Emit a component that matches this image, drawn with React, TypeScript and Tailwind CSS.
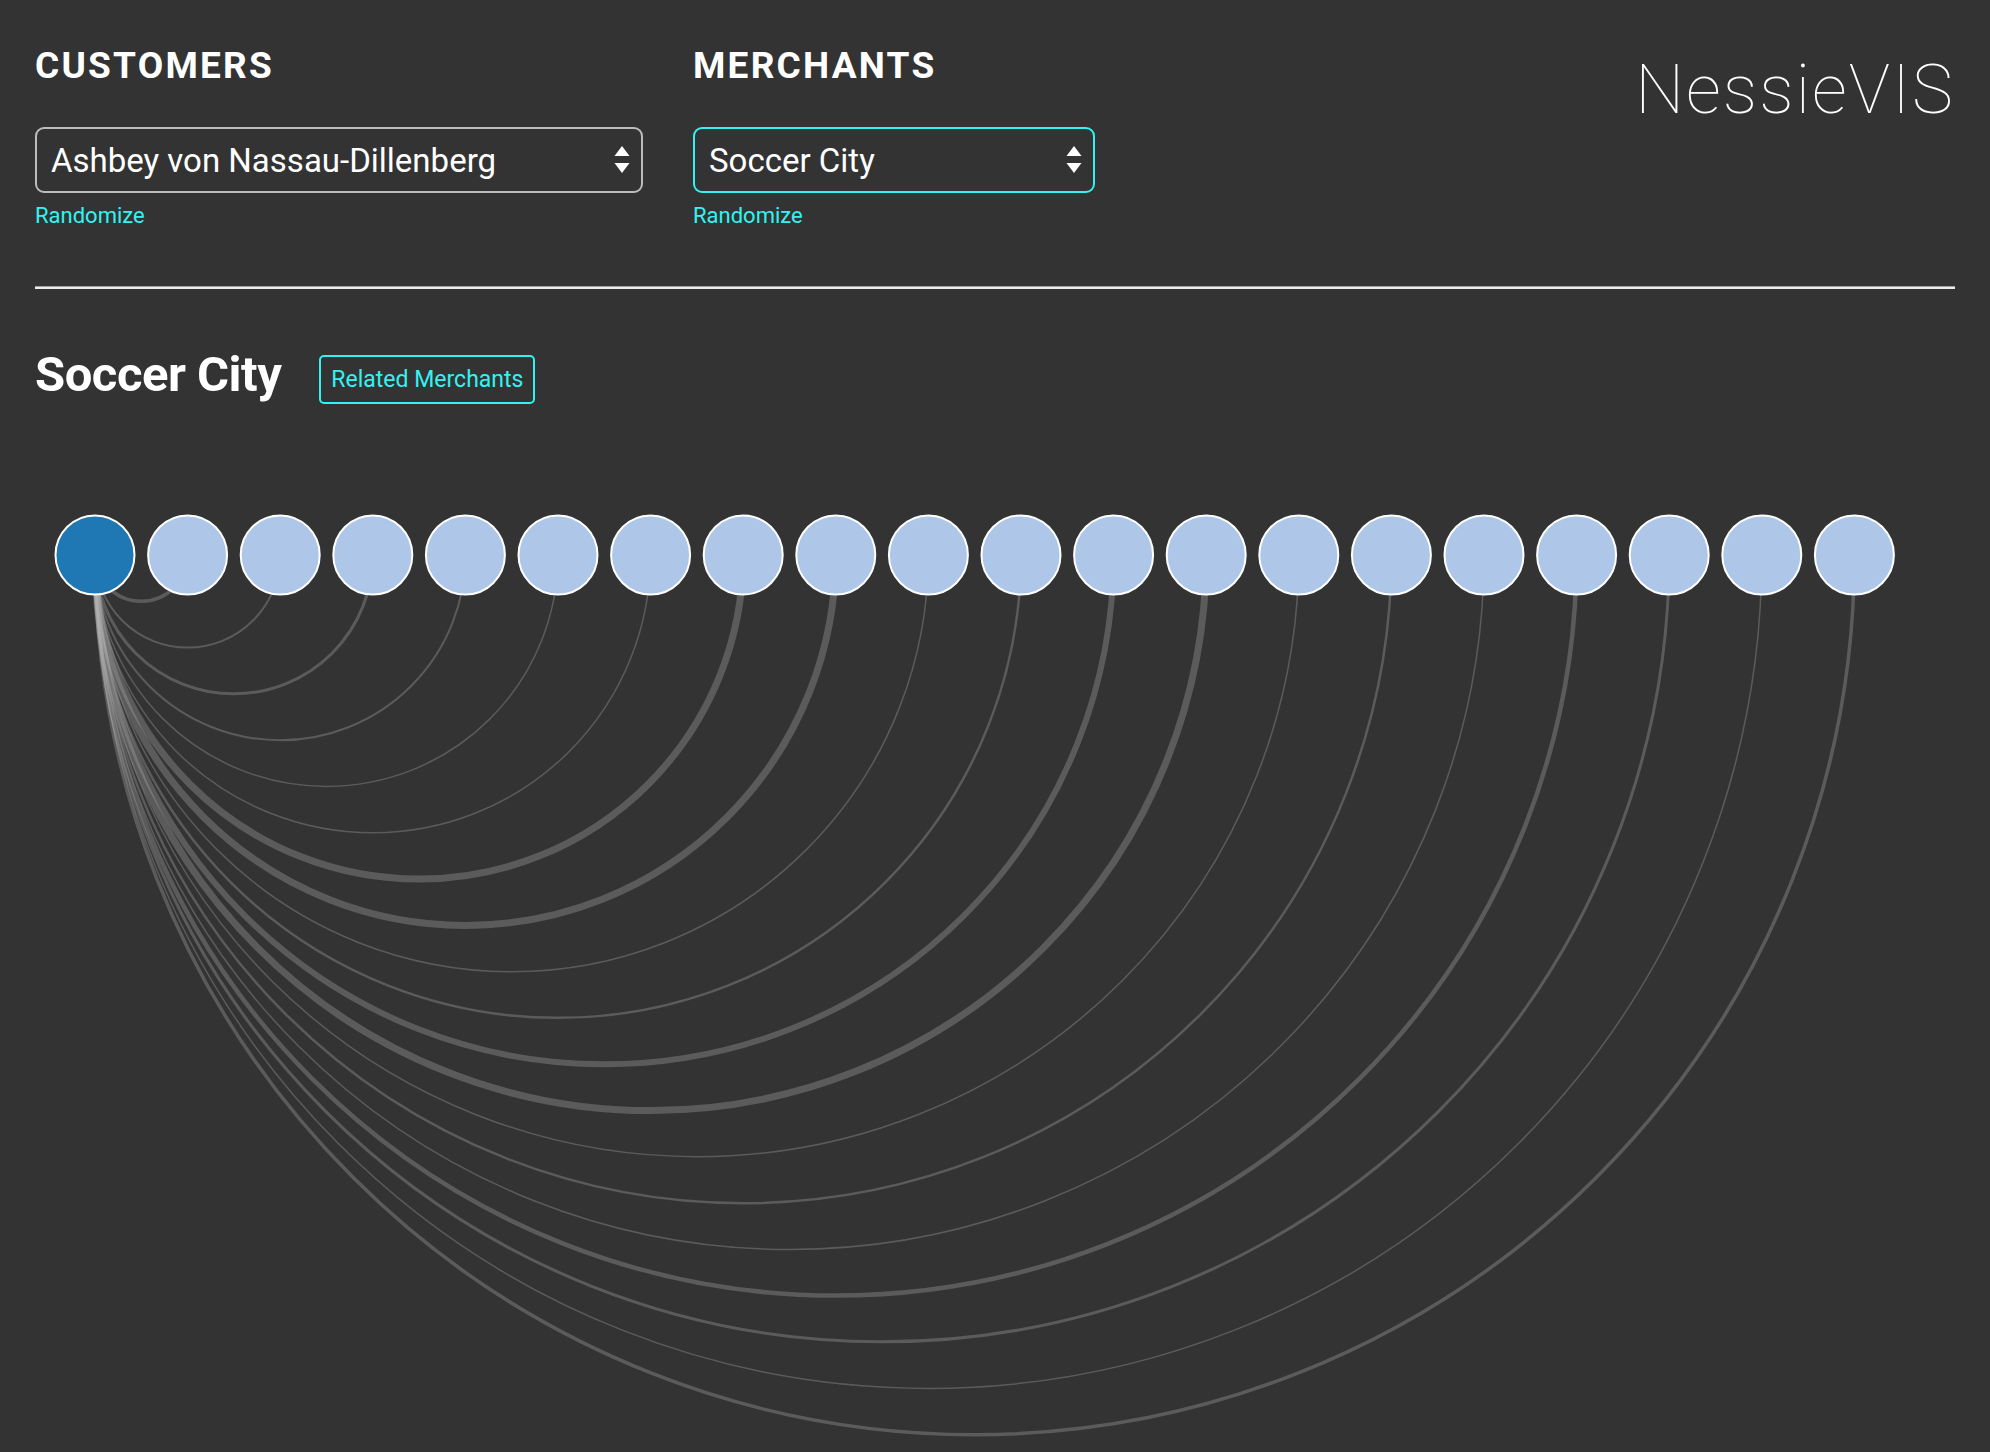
import React from 'react'

const CYAN = '#33f2f2'

// stroke width of each arc from the selected merchant (index 0) to merchant i
const WEIGHTS = [0, 3.5, 2, 3, 2, 1.5, 1.5, 7, 7, 1.5, 2.5, 6, 7, 1.5, 2.5, 1.5, 4.5, 3, 1.5, 3.5]

const X0 = 60
const STEP = 92.6
const CY = 136
const R = 39.5

function Arrows() {
  return (
    <svg width="16" height="28" viewBox="0 0 16 28" className="shrink-0">
      <path d="M8 0 L15.5 10 L0.5 10 Z" fill="#fff" />
      <path d="M0.5 17 L15.5 17 L8 27 Z" fill="#fff" />
    </svg>
  )
}

function Picker({ label, value, width, active }: { label: string; value: string; width: string; active?: boolean }) {
  return (
    <div className={width}>
      <h2 className="mt-[-1px] text-[37px] font-bold leading-none tracking-[0.06em] text-white">{label}</h2>
      <div
        className={`mt-[43px] flex h-[66px] items-center justify-between rounded-[9px] border-2 pl-[14px] pr-[11px] ${
          active ? 'border-[#33f2f2]' : 'border-[#bcbcbc]'
        }`}
      >
        <span className="text-[33px] leading-none text-white">{value}</span>
        <Arrows />
      </div>
      <a className="mt-[12px] block text-[22px] leading-none text-[#33f2f2]">Randomize</a>
    </div>
  )
}

function ArcDiagram() {
  const nodes = WEIGHTS.map((_, i) => X0 + i * STEP)
  return (
    <svg width="1920" height="1032" className="mt-[15px] block">
      {nodes.slice(1).map((x, k) => {
        const i = k + 1
        const r = (x - X0) / 2
        return (
          <path
            key={i}
            d={`M${X0},${CY} A${r},${r} 0 0,0 ${x},${CY}`}
            fill="none"
            stroke="#b0b0b0"
            strokeOpacity={0.32}
            strokeWidth={WEIGHTS[i]}
          />
        )
      })}
      {nodes.map((x, i) => (
        <circle key={i} cx={x} cy={CY} r={R} fill={i === 0 ? '#1f77b4' : '#aec7e8'} stroke="#fff" strokeWidth={2} />
      ))}
    </svg>
  )
}

export default function App() {
  return (
    <div className="min-h-screen overflow-hidden bg-[#333333] px-[35px] pt-[48px] font-['Roboto',sans-serif]">
      <header className="flex items-start">
        <Picker label="CUSTOMERS" value="Ashbey von Nassau-Dillenberg" width="w-[608px]" />
        <div className="ml-[50px]">
          <Picker label="MERCHANTS" value="Soccer City" width="w-[402px]" active />
        </div>
        <div className="ml-auto mt-[7px] text-[69px] font-thin leading-none tracking-[0.03em] text-white">NessieVIS</div>
      </header>

      <div className="mt-[59px] border-t border-b-2 border-t-[#a0a0a0] border-b-[#ececec]" />

      <div className="mt-[61px] flex items-start gap-[38px]">
        <h1 className="text-[49px] font-bold leading-none tracking-[-0.01em] text-white">Soccer City</h1>
        <button
          className="mt-[5px] h-[49px] rounded-[5px] border-2 px-[10px] text-[23px] leading-none"
          style={{ borderColor: CYAN, color: CYAN }}
        >
          Related Merchants
        </button>
      </div>

      <ArcDiagram />
    </div>
  )
}
